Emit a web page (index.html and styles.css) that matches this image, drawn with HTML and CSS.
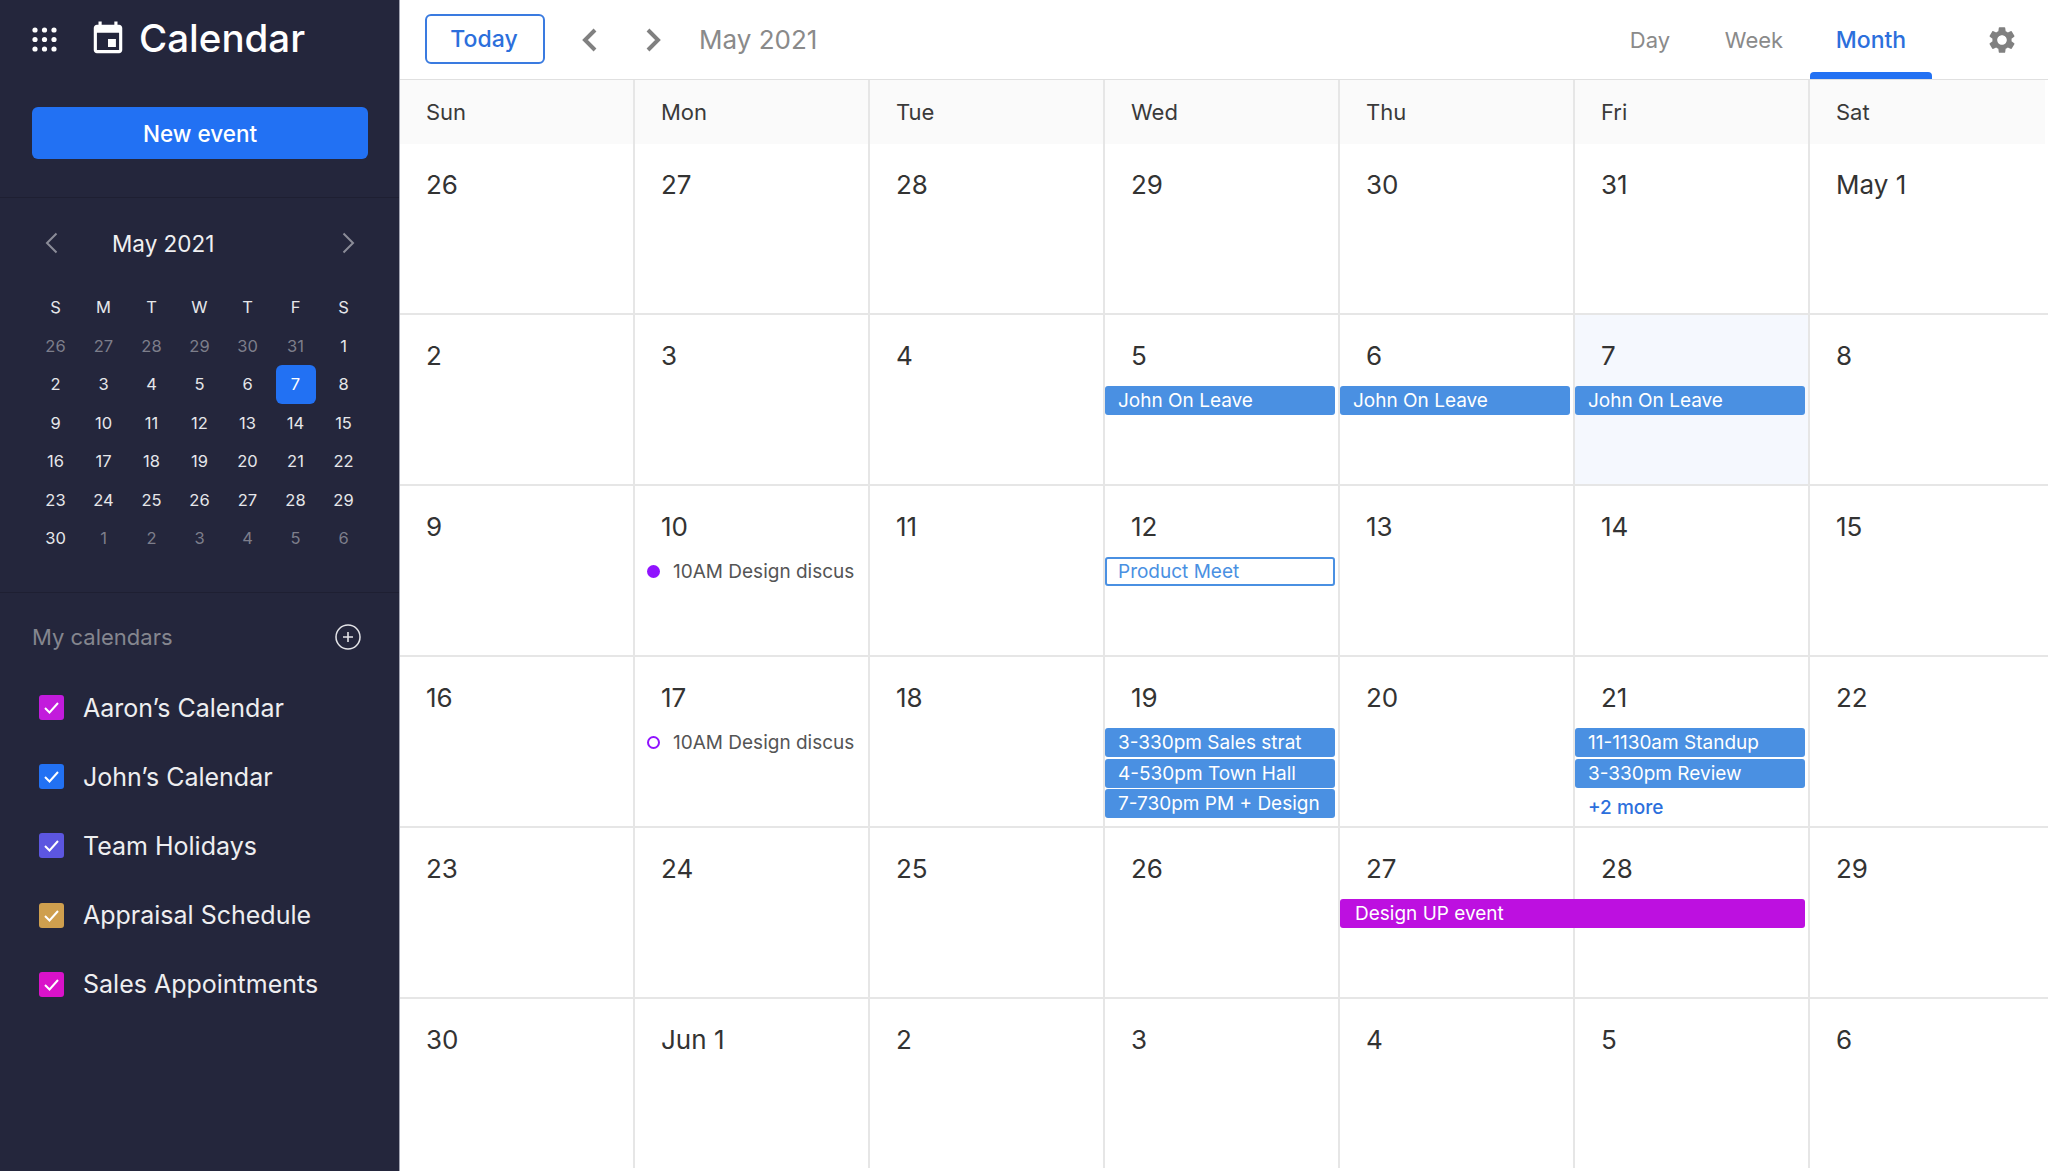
FILE: index.html
```html
<!DOCTYPE html>
<html lang="en">
<head>
<meta charset="utf-8">
<title>Calendar</title>
<link rel="stylesheet" href="styles.css">
</head>
<body>
<div class="app">
  <aside class="sidebar">
    <section class="side-top">
      <div class="brand">
        <svg class="grid-icon" viewBox="0 0 25 25"><g fill="#fff"><circle cx="3" cy="3" r="2.6"/><circle cx="12.5" cy="3" r="2.6"/><circle cx="22" cy="3" r="2.6"/><circle cx="3" cy="12.5" r="2.6"/><circle cx="12.5" cy="12.5" r="2.6"/><circle cx="22" cy="12.5" r="2.6"/><circle cx="3" cy="22" r="2.6"/><circle cx="12.5" cy="22" r="2.6"/><circle cx="22" cy="22" r="2.6"/></g></svg>
        <svg class="cal-icon" viewBox="0 0 24 24"><path fill="#fff" d="M17 12h-5v5h5v-5zM16 1v2H8V1H6v2H5c-1.11 0-1.99.9-1.99 2L3 19c0 1.1.89 2 2 2h14c1.1 0 2-.9 2-2V5c0-1.1-.9-2-2-2h-1V1h-2zm3 18H5V8h14v11z"/></svg>
        <span class="brand-name">Calendar</span>
      </div>
      <button class="new-event">New event</button>
    </section>
    <section class="mini">
      <div class="mini-head">
        <svg class="mini-arrow" viewBox="0 0 13 22"><path d="M11.5 1.5 2 11l9.5 9.5" fill="none" stroke="#8b8c98" stroke-width="2"/></svg>
        <span class="mini-title">May 2021</span>
        <svg class="mini-arrow" viewBox="0 0 13 22"><path d="M1.5 1.5 11 11l-9.5 9.5" fill="none" stroke="#8b8c98" stroke-width="2"/></svg>
      </div>
      <div class="mini-grid">
        <span class="wd">S</span><span class="wd">M</span><span class="wd">T</span><span class="wd">W</span><span class="wd">T</span><span class="wd">F</span><span class="wd">S</span>
        <span class="md off">26</span><span class="md off">27</span><span class="md off">28</span><span class="md off">29</span><span class="md off">30</span><span class="md off">31</span><span class="md">1</span>
        <span class="md">2</span><span class="md">3</span><span class="md">4</span><span class="md">5</span><span class="md">6</span><span class="md sel">7</span><span class="md">8</span>
        <span class="md">9</span><span class="md">10</span><span class="md">11</span><span class="md">12</span><span class="md">13</span><span class="md">14</span><span class="md">15</span>
        <span class="md">16</span><span class="md">17</span><span class="md">18</span><span class="md">19</span><span class="md">20</span><span class="md">21</span><span class="md">22</span>
        <span class="md">23</span><span class="md">24</span><span class="md">25</span><span class="md">26</span><span class="md">27</span><span class="md">28</span><span class="md">29</span>
        <span class="md">30</span><span class="md off">1</span><span class="md off">2</span><span class="md off">3</span><span class="md off">4</span><span class="md off">5</span><span class="md off">6</span>
      </div>
    </section>
    <section class="cals">
      <div class="cals-head">
        <span class="cals-title">My calendars</span>
        <svg class="plus" viewBox="0 0 26 26"><circle cx="13" cy="13" r="12" fill="none" stroke="#e4e4e8" stroke-width="1.5"/><path d="M13 8v10M8 13h10" stroke="#e4e4e8" stroke-width="1.6"/></svg>
      </div>
      <ul class="cal-list">
        <li class="cal-item"><span class="check c-aaron"><svg viewBox="0 0 25 25"><path d="M6 13l4.5 4.5L19 8" fill="none" stroke="#fff" stroke-width="2"/></svg></span>Aaron’s Calendar</li>
        <li class="cal-item"><span class="check c-john"><svg viewBox="0 0 25 25"><path d="M6 13l4.5 4.5L19 8" fill="none" stroke="#fff" stroke-width="2"/></svg></span>John’s Calendar</li>
        <li class="cal-item"><span class="check c-team"><svg viewBox="0 0 25 25"><path d="M6 13l4.5 4.5L19 8" fill="none" stroke="#fff" stroke-width="2"/></svg></span>Team Holidays</li>
        <li class="cal-item"><span class="check c-appr"><svg viewBox="0 0 25 25"><path d="M6 13l4.5 4.5L19 8" fill="none" stroke="#fff" stroke-width="2"/></svg></span>Appraisal Schedule</li>
        <li class="cal-item"><span class="check c-sales"><svg viewBox="0 0 25 25"><path d="M6 13l4.5 4.5L19 8" fill="none" stroke="#fff" stroke-width="2"/></svg></span>Sales Appointments</li>
      </ul>
    </section>
  </aside>
  <main class="main">
    <header class="topbar">
      <button class="today">Today</button>
      <svg class="nav-arrow prev" viewBox="0 0 16 26"><path d="M14 3 4 13l10 10" fill="none" stroke="#808080" stroke-width="4"/></svg>
      <svg class="nav-arrow next" viewBox="0 0 16 26"><path d="M2 3l10 10L2 23" fill="none" stroke="#808080" stroke-width="4"/></svg>
      <span class="top-title">May 2021</span>
      <nav class="tabs">
        <span class="tab tab-day">Day</span>
        <span class="tab tab-week">Week</span>
        <span class="tab tab-month">Month</span>
      </nav>
      <svg class="gear" viewBox="0 0 24 24"><path fill="#808080" d="M19.14 12.94c.04-.3.06-.61.06-.94 0-.32-.02-.64-.07-.94l2.03-1.58a.49.49 0 0 0 .12-.61l-1.92-3.32a.488.488 0 0 0-.59-.22l-2.39.96c-.5-.38-1.03-.7-1.62-.94l-.36-2.54a.484.484 0 0 0-.48-.41h-3.84c-.24 0-.43.17-.47.41l-.36 2.54c-.59.24-1.13.57-1.62.94l-2.39-.96c-.22-.08-.47 0-.59.22L2.74 8.87c-.12.21-.08.47.12.61l2.03 1.58c-.05.3-.09.63-.09.94s.02.64.07.94l-2.03 1.58a.49.49 0 0 0-.12.61l1.92 3.32c.12.22.37.29.59.22l2.39-.96c.5.38 1.03.7 1.62.94l.36 2.54c.05.24.24.41.48.41h3.84c.24 0 .44-.17.47-.41l.36-2.54c.59-.24 1.13-.56 1.62-.94l2.39.96c.22.08.47 0 .59-.22l1.92-3.32c.12-.22.07-.47-.12-.61l-2.01-1.58zM12 15.6c-1.98 0-3.6-1.62-3.6-3.6s1.62-3.6 3.6-3.6 3.6 1.62 3.6 3.6-1.62 3.6-3.6 3.6z"/></svg>
    </header>
    <div class="month">
      <div class="dow">Sun</div><div class="dow">Mon</div><div class="dow">Tue</div><div class="dow">Wed</div><div class="dow">Thu</div><div class="dow">Fri</div><div class="dow dow-last">Sat</div>

      <div class="cell"><div class="date">26</div></div>
      <div class="cell"><div class="date">27</div></div>
      <div class="cell"><div class="date">28</div></div>
      <div class="cell"><div class="date">29</div></div>
      <div class="cell"><div class="date">30</div></div>
      <div class="cell"><div class="date">31</div></div>
      <div class="cell"><div class="date">May 1</div></div>

      <div class="cell"><div class="date">2</div></div>
      <div class="cell"><div class="date">3</div></div>
      <div class="cell"><div class="date">4</div></div>
      <div class="cell"><div class="date">5</div><div class="ev">John On Leave</div></div>
      <div class="cell"><div class="date">6</div><div class="ev">John On Leave</div></div>
      <div class="cell cell-today"><div class="date">7</div><div class="ev">John On Leave</div></div>
      <div class="cell"><div class="date">8</div></div>

      <div class="cell"><div class="date">9</div></div>
      <div class="cell"><div class="date">10</div><div class="dot-ev"><span class="dot"></span>10AM Design discus</div></div>
      <div class="cell"><div class="date">11</div></div>
      <div class="cell"><div class="date">12</div><div class="ev ev-outline">Product Meet</div></div>
      <div class="cell"><div class="date">13</div></div>
      <div class="cell"><div class="date">14</div></div>
      <div class="cell"><div class="date">15</div></div>

      <div class="cell"><div class="date">16</div></div>
      <div class="cell"><div class="date">17</div><div class="dot-ev"><span class="dot dot-hollow"></span>10AM Design discus</div></div>
      <div class="cell"><div class="date">18</div></div>
      <div class="cell"><div class="date">19</div><div class="ev">3-330pm Sales strat</div><div class="ev">4-530pm Town Hall</div><div class="ev">7-730pm PM + Design</div></div>
      <div class="cell"><div class="date">20</div></div>
      <div class="cell"><div class="date">21</div><div class="ev">11-1130am Standup</div><div class="ev">3-330pm Review</div><div class="more">+2 more</div></div>
      <div class="cell"><div class="date">22</div></div>

      <div class="cell"><div class="date">23</div></div>
      <div class="cell"><div class="date">24</div></div>
      <div class="cell"><div class="date">25</div></div>
      <div class="cell"><div class="date">26</div></div>
      <div class="cell"><div class="date">27</div><div class="ev ev-span">Design UP event</div></div>
      <div class="cell"><div class="date">28</div></div>
      <div class="cell"><div class="date">29</div></div>

      <div class="cell cell-end"><div class="date">30</div></div>
      <div class="cell cell-end"><div class="date">Jun 1</div></div>
      <div class="cell cell-end"><div class="date">2</div></div>
      <div class="cell cell-end"><div class="date">3</div></div>
      <div class="cell cell-end"><div class="date">4</div></div>
      <div class="cell cell-end"><div class="date">5</div></div>
      <div class="cell cell-end"><div class="date">6</div></div>
    </div>
  </main>
</div>
</body>
</html>
```

FILE: styles.css
```css
* { box-sizing: border-box; }
html, body { margin: 0; padding: 0; height: 100%; background: #fff; overflow: hidden; }
body { font-family: Inter, "Noto Sans", "Liberation Sans", sans-serif; color: #333; }
.app { display: flex; width: 2048px; height: 1171px; }

/* Sidebar */
.sidebar { flex: 0 0 400px; height: 100%; background: #24263c; border-right: 1px solid #a3a5b3; color: #fff; }
.side-top { padding: 0 31px 38px 32px; border-bottom: 1px solid #1e1f32; }
.brand { display: flex; align-items: center; height: 78px; }
.grid-icon { width: 25px; height: 25px; flex: none; }
.cal-icon { width: 38px; height: 38px; flex: none; margin-left: 32px; }
.brand-name { margin: 0 0 2px 12px; font-size: 38.5px; font-weight: 500; line-height: 1; }
.new-event { display: block; width: 336px; height: 52px; margin-top: 29px; border: 0; border-radius: 6px; background: #2271f3; color: #fff; font: 500 22.5px Inter, sans-serif; }
.mini { padding: 30px 0 34px; border-bottom: 1px solid #1e1f32; }
.mini-head { display: flex; align-items: center; height: 30px; padding: 0 44px 0 45px; }
.mini-arrow { width: 13px; height: 22px; flex: none; }
.mini-title { flex: 1; padding-left: 54px; font-size: 22.5px; font-weight: 400; color: #f0f0f2; }
.mini-grid { display: grid; grid-template-columns: repeat(7, 48px); grid-auto-rows: 38.5px; margin: 30px 0 0 31.5px; }
.wd, .md { display: flex; align-items: center; justify-content: center; font-size: 16.5px; color: #e6e6ea; }
.off { color: #7d7e8b; }
.sel { position: relative; color: #fff; z-index: 0; isolation: isolate; }
.sel::before { content: ""; position: absolute; left: 4px; top: 0; width: 40px; height: 39px; border-radius: 6px; background: #2271f3; z-index: -1; }
.cals { padding: 29px 0 0 32px; }
.cals-head { display: flex; align-items: center; justify-content: space-between; height: 30px; padding-right: 38px; }
.cals-title { font-size: 22px; color: #85868f; }
.plus { width: 26px; height: 26px; flex: none; }
.cal-list { list-style: none; margin: 21.5px 0 0; padding: 0; }
.cal-item { display: flex; align-items: center; height: 69.2px; font-size: 25px; color: #eeeef0; }
.check { display: block; width: 25px; height: 25px; flex: none; margin: 0 19px 0 7px; border-radius: 3px; }
.check svg { display: block; width: 25px; height: 25px; }
.c-aaron { background: #c21bdc; }
.c-john { background: #2271f3; }
.c-team { background: #5c56e0; }
.c-appr { background: #cf9f4e; }
.c-sales { background: #d912c9; }

/* Main */
.main { flex: 1; min-width: 0; }
.topbar { display: flex; align-items: center; height: 80px; padding: 0 0 0 25px; border-bottom: 1px solid #e0e0e0; }
.today { width: 120px; height: 50px; margin-bottom: 1px; padding: 0 2px 0 0; border: 2px solid #3a7be0; border-radius: 6px; background: #fff; color: #2c6fdc; font: 500 23px Inter, sans-serif; }
.nav-arrow { width: 16px; height: 26px; flex: none; }
.prev { margin-left: 36px; }
.next { margin-left: 49px; }
.top-title { margin-left: 37px; font-size: 26px; color: #8a8a8a; }
.tabs { display: flex; height: 79px; margin-left: auto; }
.tab { display: flex; align-items: center; justify-content: center; font-size: 22px; color: #8a8a8a; }
.tab-day { width: 40px; margin-right: 55px; }
.tab-week { width: 58px; margin-right: 27px; }
.tab-month { width: 122px; position: relative; color: #2c6fdc; font-size: 23px; font-weight: 500; }
.tab-month::after { content: ""; position: absolute; left: 0; right: 0; bottom: 0; height: 7px; border-radius: 4px 4px 0 0; background: #2271f3; }
.gear { width: 32px; height: 32px; flex: none; margin: 0 30px 0 54px; align-self: center; }

.month { display: grid; grid-template-columns: 233px repeat(5, 235px) 1fr; grid-template-rows: 64px repeat(5, 171px) 169px; }
.dow { display: flex; align-items: center; padding-left: 26px; background: #fafafa; border-left: 2px solid #e6e6e6; font-size: 22px; color: #3a3a3a; }
.dow:first-child { border-left: 0; padding-left: 26px; }
.dow-last { margin-right: 3px; }
.cell { border-left: 2px solid #e6e6e6; border-bottom: 2px solid #e6e6e6; padding-top: 26px; }
.cell:nth-child(7n+1) { border-left: 0; }
.cell:nth-child(7n+1) .date { padding-left: 26px; }
.cell-end { border-bottom: 0; }
.cell-today { background: #f5f8fe; }
.date { height: 30px; padding-left: 26px; font-size: 26px; line-height: 30px; color: #333; margin-bottom: 15px; }
.ev { width: 230px; height: 29px; margin-bottom: 1.5px; padding-left: 13px; border-radius: 3px; background: #4a90e2; color: #fff; font-size: 19px; line-height: 29px; white-space: nowrap; }
.ev-outline { background: #fff; border: 2px solid #4a90e2; padding-left: 11px; color: #4a90e2; line-height: 25px; }
.ev-span { position: relative; z-index: 1; width: 465px; padding-left: 15px; background: #bd10e0; }
.dot-ev { display: flex; align-items: center; height: 29px; padding-left: 12px; font-size: 19px; color: #555; white-space: nowrap; }
.dot { flex: none; width: 13px; height: 13px; margin-right: 13px; border-radius: 50%; background: #9013fe; }
.dot-hollow { background: transparent; border: 2px solid #9013fe; }
.more { height: 24px; margin-top: 8px; padding-left: 13px; font-size: 19px; font-weight: 500; line-height: 24px; color: #2c6fdc; }
```
